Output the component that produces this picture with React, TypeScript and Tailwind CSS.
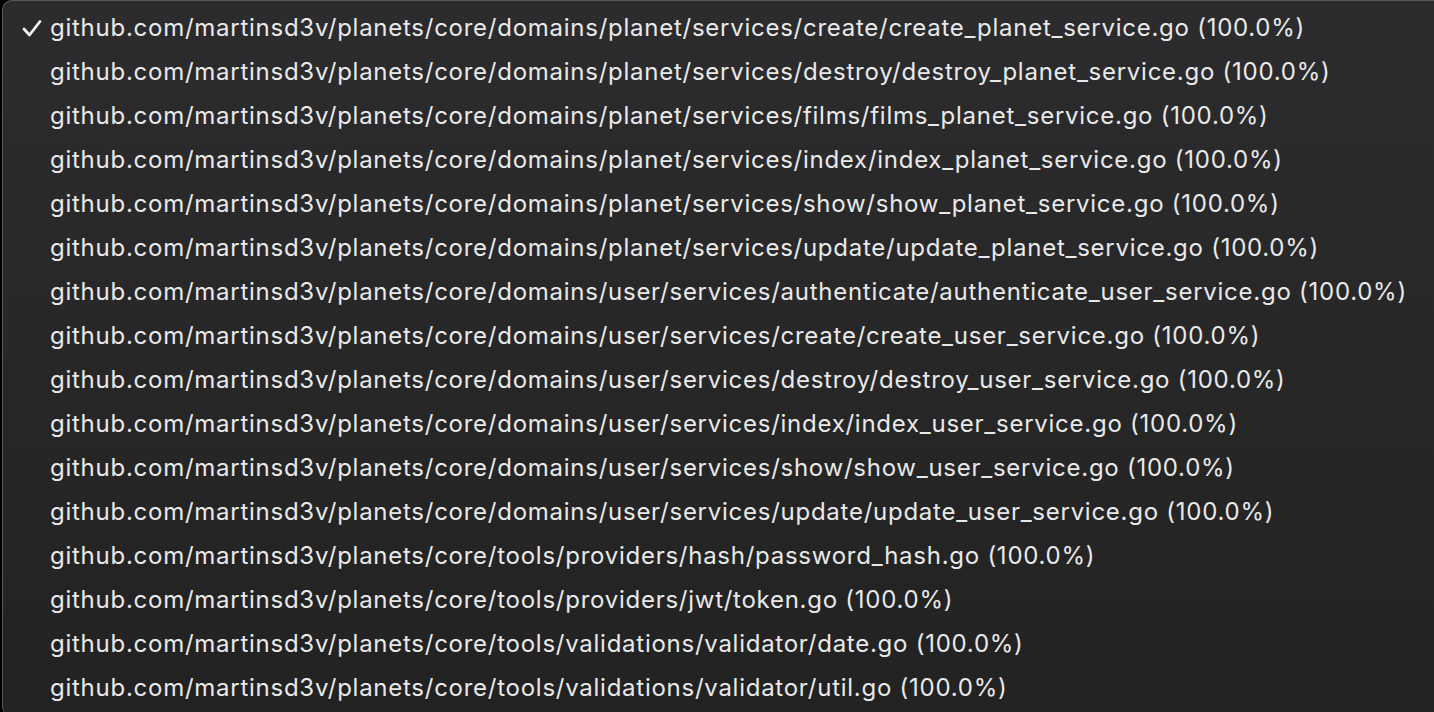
const files = [
  "planet/services/create/create_planet_service.go",
  "planet/services/destroy/destroy_planet_service.go",
  "planet/services/films/films_planet_service.go",
  "planet/services/index/index_planet_service.go",
  "planet/services/show/show_planet_service.go",
  "planet/services/update/update_planet_service.go",
  "user/services/authenticate/authenticate_user_service.go",
  "user/services/create/create_user_service.go",
  "user/services/destroy/destroy_user_service.go",
  "user/services/index/index_user_service.go",
  "user/services/show/show_user_service.go",
  "user/services/update/update_user_service.go",
];

const tools = [
  "providers/hash/password_hash.go",
  "providers/jwt/token.go",
  "validations/validator/date.go",
  "validations/validator/util.go",
];

const base = "github.com/martinsd3v/planets/core/";

const items = [
  ...files.map((f) => base + "domains/" + f),
  ...tools.map((f) => base + "tools/" + f),
];

export default function App() {
  return (
    <div className="h-[712px] w-[1434px] overflow-hidden bg-black pl-[2px]">
      <div
        className="h-[716px] rounded-tl-[10px] rounded-bl-[10px] border-l border-t border-[#5a5a5c] bg-gradient-to-b from-[#2c2c2e] to-[#222222] pt-[5px] text-[#e9e9e9]"
        style={{ fontFamily: "Inter, 'Liberation Sans', sans-serif" }}
      >
        {items.map((name, i) => (
          <div key={name} className="flex h-[44px] items-center">
            <div className="flex w-[47px] justify-end pr-[8px]">
              {i === 0 && (
                <svg width="20" height="18" viewBox="0 0 20 18" fill="none">
                  <path
                    d="M2 10 L7.5 16 L18 2.5"
                    stroke="#f2f2f2"
                    strokeWidth="2.8"
                    strokeLinecap="round"
                    strokeLinejoin="round"
                  />
                </svg>
              )}
            </div>
            <span className="whitespace-nowrap text-[24px] tracking-[0.74px]">
              {name} (100.0%)
            </span>
          </div>
        ))}
      </div>
    </div>
  );
}
